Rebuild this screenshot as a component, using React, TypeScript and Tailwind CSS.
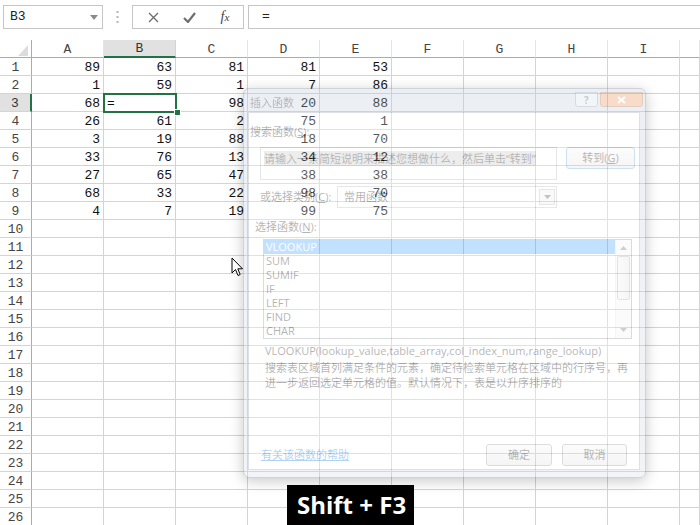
import React from 'react';

const COLS = ['A', 'B', 'C', 'D', 'E', 'F', 'G', 'H', 'I', 'J'];
const DATA: (string | number)[][] = [
  [89, 63, 81, 81, 53],
  [1, 59, 1, 7, 86],
  [68, '=', 98, 20, 88],
  [26, 61, 2, 75, 1],
  [3, 19, 88, 18, 70],
  [33, 76, 13, 34, 12],
  [27, 65, 47, 38, 38],
  [68, 33, 22, 98, 70],
  [4, 7, 19, 99, 75],
];
const FUNCS = ['VLOOKUP', 'SUM', 'SUMIF', 'IF', 'LEFT', 'FIND', 'CHAR'];

const FormulaBar: React.FC = () => (
  <div className="h-[40px] flex items-start pt-[5px] pl-[3px]">
    <div className="w-[100px] h-[24px] border border-[#c6c6c6] flex items-center justify-between pl-[6px] pr-[4px] font-['Liberation_Mono',monospace] text-[13px] text-[#222]">
      <span>B3</span>
      <svg width="8" height="5" viewBox="0 0 8 5">
        <path d="M0 0 L8 0 L4 5 Z" fill="#8a8a8a" />
      </svg>
    </div>
    <div className="w-[29px] h-[24px] flex items-center justify-center">
      <svg width="3" height="12" viewBox="0 0 3 12">
        <rect x="0.5" y="0" width="2" height="2" fill="#b5b5b5" />
        <rect x="0.5" y="5" width="2" height="2" fill="#b5b5b5" />
        <rect x="0.5" y="10" width="2" height="2" fill="#b5b5b5" />
      </svg>
    </div>
    <div className="w-[112px] h-[24px] border border-[#c6c6c6] grid grid-cols-3 pl-[2px] items-center justify-items-center">
      <svg width="11" height="11" viewBox="0 0 11 11">
        <path d="M1 1 L10 10 M10 1 L1 10" stroke="#6b6b6b" strokeWidth="1.3" />
      </svg>
      <svg width="13" height="11" viewBox="0 0 13 11">
        <path d="M1 6 L5 10 L12 1" stroke="#6f6f6f" strokeWidth="2.2" fill="none" />
      </svg>
      <span className="font-['Liberation_Serif',serif] italic text-[14px] text-[#444] leading-none">
        f<span className="text-[11px]">x</span>
      </span>
    </div>
    <div className="ml-[4px] flex-1 -mr-[2px] h-[24px] border border-[#c6c6c6] flex items-center pl-[13px] font-['Liberation_Mono',monospace] text-[13px] text-[#222]">
      =
    </div>
  </div>
);

const Sheet: React.FC = () => (
  <div className="grid grid-cols-[32px_repeat(9,72px)_20px] auto-rows-[18px] font-['Liberation_Mono',monospace] text-[13px] leading-[17px] text-[#111]">
    <div className="border-r border-b border-[#ababab] relative">
      <svg className="absolute left-[18px] top-[5px]" width="10" height="11" viewBox="0 0 10 11">
        <path d="M10 0 L10 11 L0 11 Z" fill="#dcdcdc" />
      </svg>
    </div>
    {COLS.map((c) => (
      <div
        key={c}
        className={
          c === 'B'
            ? 'bg-[#e1e1e1] border-b-2 border-b-[#217346] border-r border-r-[#d4d4d4] flex items-center justify-center pt-[1px] text-[#333]'
            : 'border-b border-b-[#ababab] border-r border-r-[#e4e4e4] flex items-center justify-center pt-[1px] text-[#444]'
        }
      >
        {c === 'J' ? '' : c}
      </div>
    ))}
    {Array.from({ length: 26 }, (_, r) => (
      <React.Fragment key={r}>
        <div
          className={
            r === 2
              ? 'bg-[#e1e1e1] border-r-2 border-r-[#217346] border-b border-b-[#d4d4d4] flex items-center justify-center pt-[1px] text-[#333]'
              : 'border-r border-r-[#ababab] border-b border-b-[#d4d4d4] flex items-center justify-center pt-[1px] text-[#444]'
          }
        >
          {r + 1}
        </div>
        {COLS.map((c, ci) => {
          const v = DATA[r]?.[ci];
          const isSel = r === 2 && ci === 1;
          return (
            <div
              key={c}
              className={
                isSel
                  ? 'relative border-r border-b border-[#d4d4d4] flex items-center pt-[1px] pl-[3px]'
                  : 'border-r border-b border-[#d4d4d4] flex items-center justify-end pt-[1px] pr-[3px]'
              }
            >
              {v !== undefined ? v : ''}
              {isSel && (
                <>
                  <div className="absolute -left-[1px] -top-[1px] w-[74px] h-[20px] border-2 border-[#217346]" />
                  <div className="absolute left-[70px] top-[15px] w-[7px] h-[7px] bg-[#217346] border border-white" />
                </>
              )}
            </div>
          );
        })}
      </React.Fragment>
    ))}
  </div>
);

const Btn: React.FC<{ w: string; blue?: boolean; children: React.ReactNode }> = ({ w, blue, children }) => (
  <div
    className={`${w} h-[22px] rounded-[3px] border ${
      blue ? 'border-[#5a9bd0]' : 'border-[#8a8a8a]'
    } bg-gradient-to-b from-[#f4f4f4] to-[#dedede] flex items-center justify-center`}
  >
    {children}
  </div>
);

const InsertFunctionDialog: React.FC = () => (
  <div className="absolute left-[243px] top-[88px] w-[403px] h-[390px] rounded-[6px] shadow-[0_3px_14px_rgba(0,0,0,0.22)]">
    <div className="w-full h-full opacity-30 rounded-[6px] border border-[#5d6b7c] bg-gradient-to-b from-[#bdcadb] to-[#d2dae4] flex flex-col font-['Open_Sans','Noto_Sans_CJK_SC',sans-serif] text-black">
      <div className="h-[23px] flex items-start">
        <span className="pl-[6px] pt-[7px] text-[11px] leading-[14px]">插入函数</span>
        <div className="ml-auto mr-[2px] mt-[3px] flex gap-[2px]">
          <div className="w-[23px] h-[15px] rounded-b-[3px] border border-[#7b8796] bg-[#d8e0ea] flex items-center justify-center text-[10px] leading-none font-bold text-[#445]">
            ?
          </div>
          <div className="w-[43px] h-[15px] rounded-b-[3px] border border-[#9a5a34] bg-[#e68a4c] flex items-center justify-center">
            <svg width="9" height="8" viewBox="0 0 9 8">
              <path d="M1 1 L8 7 M8 1 L1 7" stroke="#fff" strokeWidth="1.8" />
            </svg>
          </div>
        </div>
      </div>
      <div className="flex-1 ml-[4px] mr-[5px] mb-[7px] bg-white border border-[#8e9bab] flex flex-col text-[11px] leading-[14px]">
        <div className="mt-[12px] ml-[1px]">
          搜索函数(<span className="underline">S</span>):
        </div>
        <div className="mt-[8px] flex items-start">
          <div className="ml-[11px] w-[297px] h-[33px] border border-[#abadb3] pt-[4px] pl-[3px]">
            <span className="bg-[#c4c4c4] leading-[13px]">请输入一条简短说明来描述您想做什么，然后单击“转到”</span>
          </div>
          <div className="ml-[9px]">
            <Btn w="w-[69px]" blue>
              转到(<span className="underline">G</span>)
            </Btn>
          </div>
        </div>
        <div className="mt-[6px] flex items-center h-[22px]">
          <div className="ml-[11px] w-[77px]">
            或选择类别(<span className="underline">C</span>):
          </div>
          <div className="w-[220px] h-[22px] border border-[#abadb3] flex items-center pl-[6px]">
            <span>常用函数</span>
            <div className="ml-auto mr-[1px] w-[16px] h-[16px] border border-[#acacac] bg-[#ececec] flex items-center justify-center">
              <svg width="7" height="4" viewBox="0 0 7 4">
                <path d="M0 0 L7 0 L3.5 4 Z" fill="#333" />
              </svg>
            </div>
          </div>
        </div>
        <div className="mt-[12px] ml-[6px]">
          选择函数(<span className="underline">N</span>):
        </div>
        <div className="mt-[5px] ml-[14px] w-[369px] h-[100px] border border-[#828790] flex">
          <div className="flex-1 flex flex-col">
            {FUNCS.map((f, i) => (
              <div
                key={f}
                className={i === 0 ? 'h-[14px] pl-[2px] bg-[#3399ff] text-white' : 'h-[14px] pl-[2px]'}
              >
                {f}
              </div>
            ))}
          </div>
          <div className="w-[16px] bg-[#f0f0f0] border-l border-[#dcdcdc] flex flex-col items-center">
            <svg className="mt-[6px]" width="7" height="4" viewBox="0 0 7 4">
              <path d="M0 4 L7 4 L3.5 0 Z" fill="#606060" />
            </svg>
            <div className="mt-[6px] w-[13px] h-[44px] border border-[#a0a0a0] rounded-[2px] bg-gradient-to-r from-[#f2f2f2] to-[#dcdcdc]" />
            <svg className="mt-auto mb-[6px]" width="7" height="4" viewBox="0 0 7 4">
              <path d="M0 0 L7 0 L3.5 4 Z" fill="#606060" />
            </svg>
          </div>
        </div>
        <div className="mt-[5px] ml-[16px] whitespace-nowrap">
          VLOOKUP(lookup_value,table_array,col_index_num,range_lookup)
        </div>
        <div className="mt-[2px] ml-[16px] w-[372px] leading-[15px]">
          搜索表区域首列满足条件的元素，确定待检索单元格在区域中的行序号，再进一步返回选定单元格的值。默认情况下，表是以升序排序的
        </div>
        <div className="mt-auto mb-[3px] flex items-center">
          <span className="ml-[12px] text-[#0066cc] underline">有关该函数的帮助</span>
          <div className="ml-auto">
            <Btn w="w-[66px]">确定</Btn>
          </div>
          <div className="ml-[10px] mr-[12px]">
            <Btn w="w-[65px]">取消</Btn>
          </div>
        </div>
      </div>
    </div>
  </div>
);

const Cursor: React.FC = () => (
  <svg className="absolute left-[231px] top-[257px]" width="13" height="20" viewBox="0 0 13 20">
    <path
      d="M1 1 L1 16 L4.5 12.5 L7 18.5 L9.2 17.5 L6.8 11.8 L11.5 11.8 Z"
      fill="#fff"
      stroke="#000"
      strokeWidth="1"
      strokeLinejoin="miter"
    />
  </svg>
);

export default function App() {
  return (
    <div className="relative w-[700px] h-[525px] overflow-hidden bg-white">
      <FormulaBar />
      <Sheet />
      <InsertFunctionDialog />
      <Cursor />
      <div className="absolute left-[287px] top-[485px] w-[127px] h-[44px] bg-black pt-[4px] pl-[10px] font-['Open_Sans',sans-serif] font-bold text-[24px] leading-[32px] text-white whitespace-nowrap">
        Shift + F3
      </div>
    </div>
  );
}
